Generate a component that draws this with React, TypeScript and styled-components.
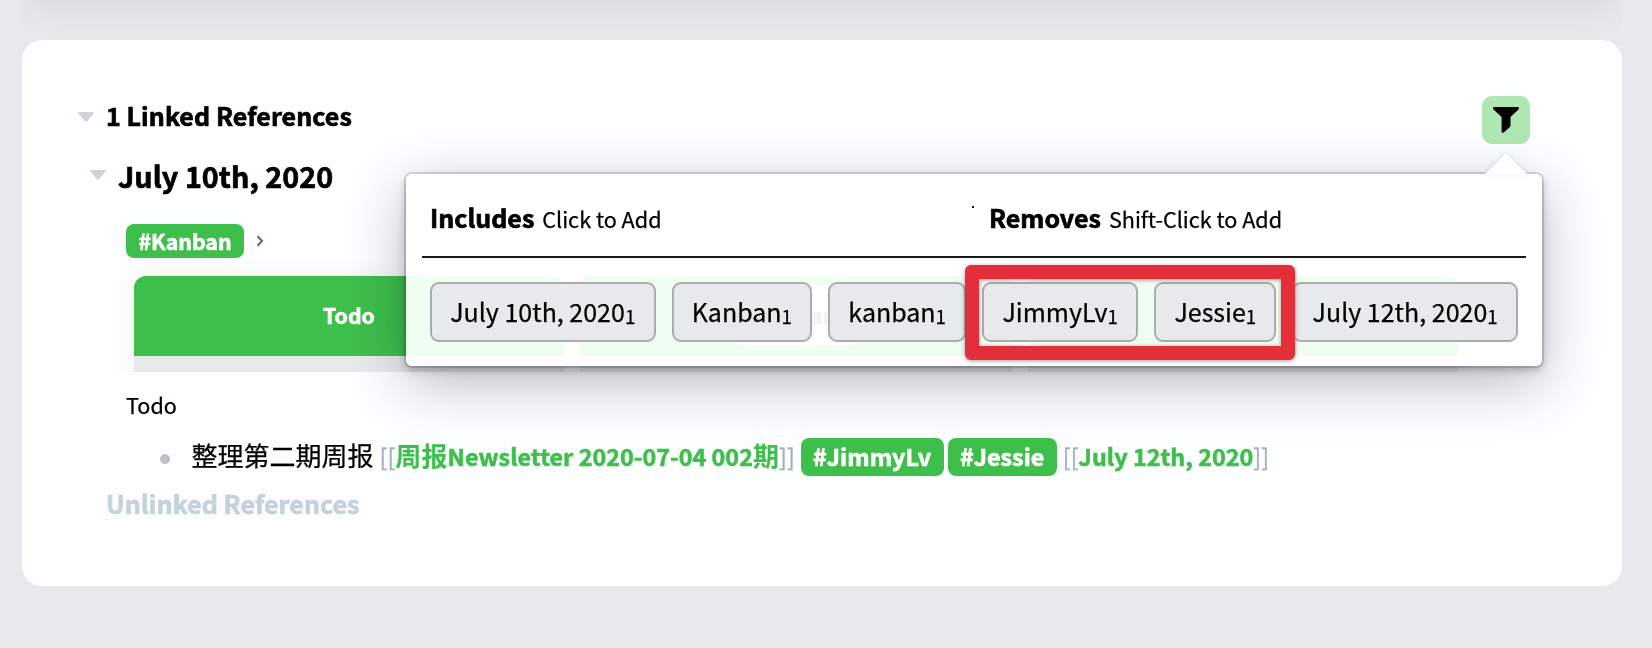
import React from "react";
import styled, { createGlobalStyle } from "styled-components";

const green = "#3ebf4b";

const GlobalStyle = createGlobalStyle`
  * { box-sizing: border-box; }
  body {
    margin: 0;
    background: #e8e9eb;
    color: #000;
    font-family: "Noto Sans CJK SC", "Open Sans", sans-serif;
    -webkit-text-stroke: 0.25px;
  }
`;

const Page = styled.div`
  height: 648px;
  padding: 0 30px 0 22px;
  overflow: hidden;
`;

const PreviousEdge = styled.div`
  height: 40px;
  overflow: hidden;
  &::before {
    content: "";
    display: block;
    height: 40px;
    margin-top: -40px;
    box-shadow: 0 0 50px rgba(0, 0, 0, 0.1);
  }
`;

const Card = styled.main`
  position: relative;
  display: flex;
  flex-direction: column;
  height: 546px;
  padding: 50px 92px 0 56px;
  border-radius: 20px;
  background: #fdfeff;
`;

const Row = styled.div<{ $height: number; $top?: number; $indent?: number }>`
  display: flex;
  align-items: center;
  flex: none;
  height: ${(p) => p.$height}px;
  margin-top: ${(p) => p.$top ?? 0}px;
  padding-left: ${(p) => p.$indent ?? 0}px;
  white-space: nowrap;
`;

const Caret = styled.svg<{ $shift: number }>`
  display: block;
  width: 16px;
  height: 10px;
  margin-top: ${(p) => p.$shift}px;
  fill: #d1d2d3;
`;

const SectionTitle = styled.h2<{ $muted?: boolean }>`
  margin: 0 0 0 ${(p) => (p.$muted ? 0 : 12)}px;
  font-size: 25px;
  line-height: 30px;
  letter-spacing: 0.08px;
  -webkit-text-stroke: 0.7px;
  color: ${(p) => (p.$muted ? "#c5d1dc" : "#000")};
`;

const PageTitle = styled.h1`
  margin: 0 0 0 12px;
  font-size: 28.7px;
  line-height: 36px;
  letter-spacing: 0.06px;
  -webkit-text-stroke: 0.7px;
`;

const FilterButton = styled.button`
  display: flex;
  align-items: center;
  justify-content: center;
  width: 48px;
  height: 48px;
  margin: 10px 0 0 auto;
  padding: 0 0 1px;
  border: 0;
  border-radius: 10px;
  background: #aee7b2;
`;

const Tag = styled.span<{ $small?: boolean }>`
  height: ${(p) => (p.$small ? 34 : 38)}px;
  margin-right: ${(p) => (p.$small ? 12 : 4)}px;
  padding: 0 12.5px;
  border-radius: 8px;
  background: ${green};
  color: #fff;
  font-size: ${(p) => (p.$small ? 21.3 : 23.3)}px;
  font-weight: 700;
  line-height: ${(p) => (p.$small ? 33 : 36)}px;
  -webkit-text-stroke: 0.6px;
`;

const Board = styled.div`
  display: grid;
  grid-template-columns: 430px 432px 430px;
  gap: 16px;
  flex: none;
  height: 112px;
  margin: 2px 0 0 42px;
  padding: 16px 0 0 14px;
  overflow: hidden;
`;

const Column = styled.section`
  height: 140px;
  border-radius: 12px;
  overflow: hidden;
  background: #e8e9eb;
  box-shadow: 0 0 24px rgba(0, 0, 0, 0.06);
`;

const ColumnHeader = styled.header`
  display: flex;
  align-items: center;
  justify-content: center;
  height: 80px;
  padding-bottom: 3px;
  background: ${green};
  color: #fff;
  font-size: 21.3px;
  font-weight: 700;
  -webkit-text-stroke: 0.6px;
`;

const ColumnName = styled.span`
  padding: 0 24px;
  border-radius: 8px;
  background: #fff;
  color: #23262b;
  line-height: 60px;
`;

const Path = styled.p`
  margin: 0;
  font-size: 21.6px;
  line-height: 30px;
`;

const Bullet = styled.span`
  width: 10px;
  height: 10px;
  margin: 4px 21.5px 0 0;
  border-radius: 50%;
  background: #c0c1c2;
`;

const Block = styled.div`
  display: flex;
  align-items: baseline;
  margin-top: -2px;
  font-size: 26px;
  line-height: 36px;
`;

const PageLink = styled.span<{ $gap?: number }>`
  margin: 0 5.8px 0 ${(p) => p.$gap ?? 6}px;
  color: ${green};
  font-size: 23.3px;
  font-weight: 700;
  letter-spacing: 0.04px;
  -webkit-text-stroke: 0.6px;
`;

const Bracket = styled.span`
  color: #a0afbc;
  font-weight: 400;
  -webkit-text-stroke: 0.3px;
`;

const Han = styled.span`
  font-size: 26px;
  -webkit-text-stroke: 0;
`;

const Popover = styled.div`
  position: absolute;
  top: 134px;
  left: 384px;
  width: 1136px;
  height: 192px;
  padding: 8px 16px 0;
  border-radius: 6px;
  background: rgba(255, 255, 255, 0.94);
  backdrop-filter: saturate(1.5);
  box-shadow: 0 0 0 2px rgba(16, 22, 26, 0.14), 0 4px 8px rgba(16, 22, 26, 0.26),
    0 16px 56px rgba(16, 22, 46, 0.3);
`;

const Arrow = styled.svg`
  position: absolute;
  top: -21px;
  right: 12px;
  width: 48px;
  height: 22px;
  fill: #fdfeff;
  filter: drop-shadow(0 -1px 2px rgba(16, 22, 26, 0.12));
`;

const PopoverHeader = styled.div`
  display: grid;
  grid-template-columns: 1fr 537px;
  height: 76px;
  padding: 17px 0 0 8px;
  border-bottom: 2px solid #14191f;
`;

const Legend = styled.div`
  display: flex;
  align-items: baseline;
  gap: 8px;
  height: 36px;
  line-height: 36px;
  white-space: nowrap;
`;

const LegendName = styled.strong`
  font-size: 25px;
  -webkit-text-stroke: 0.7px;
`;

const LegendHint = styled.span`
  font-size: 21.6px;
`;

const Speck = styled.i`
  position: absolute;
  top: 32px;
  left: 566px;
  width: 2px;
  height: 2px;
  background: #111;
`;

const Chips = styled.div`
  display: flex;
  gap: 16px;
  padding: 24px 0 0 8px;
`;

const Chip = styled.button`
  height: 60px;
  padding: 0 18.2px 2px;
  border: 2px solid #a9acae;
  border-radius: 9px;
  background: #e8e9eb;
  color: #000;
  font-family: inherit;
  font-size: 25px;
  line-height: 54px;
  white-space: nowrap;
  -webkit-text-stroke: 0.25px;
`;

const Count = styled.small`
  position: relative;
  top: 2px;
  font-size: 18.8px;
  line-height: 1;
`;

const Highlight = styled.div`
  position: absolute;
  top: 91px;
  left: 559px;
  width: 330px;
  height: 95px;
  border: 14px solid #e22f39;
  border-radius: 6px;
  filter: drop-shadow(0 1px 2px rgba(60, 0, 0, 0.4));
`;

const filters = ["July 10th, 2020", "Kanban", "kanban", "JimmyLv", "Jessie", "July 12th, 2020"];

const CaretIcon = ({ shift }: { shift: number }) => (
  <Caret viewBox="0 0 16 10" $shift={shift}>
    <path d="M1 0h14c1 0 1.3.9.6 1.6L8.7 9.4c-.4.5-1 .5-1.4 0L.4 1.6C-.3.9 0 0 1 0z" />
  </Caret>
);

export default function App() {
  return (
    <>
      <GlobalStyle />
      <Page>
        <PreviousEdge />
        <Card>
          <Row $height={50}>
            <CaretIcon shift={4} />
            <SectionTitle>1 Linked References</SectionTitle>
            <FilterButton aria-label="Filter">
              <svg width="26" height="26" viewBox="0 0 26 26">
                <path d="M1.4 0h23.2c1.4 0 1.8 1.5.9 2.4L17.5 10v8.6c0 .6-.2 1-.6 1.4l-5.8 5.3c-1 .9-2.5.4-2.5-.9V10L.5 2.4C-.4 1.5 0 0 1.4 0z" />
              </svg>
            </FilterButton>
          </Row>
          <Row $height={51} $top={10} $indent={12}>
            <CaretIcon shift={-1} />
            <PageTitle>July 10th, 2020</PageTitle>
          </Row>
          <Row $height={34} $top={23} $indent={48}>
            <Tag $small>#Kanban</Tag>
            <svg width="8" height="12" viewBox="0 0 8 12" fill="none" stroke="#5c7080" strokeWidth="2.2">
              <path d="M1.5 1.2 6 6l-4.5 4.8" />
            </svg>
          </Row>
          <Board>
            <Column>
              <ColumnHeader>Todo</ColumnHeader>
            </Column>
            <Column>
              <ColumnHeader>
                <ColumnName>Kanban</ColumnName>
              </ColumnHeader>
            </Column>
            <Column>
              <ColumnHeader />
            </Column>
          </Board>
          <Row $height={30} $top={18} $indent={48}>
            <Path>Todo</Path>
          </Row>
          <Row $height={38} $top={18} $indent={82}>
            <Bullet />
            <Block>
              整理第二期周报
              <PageLink>
                <Bracket>[[</Bracket>
                <Han>周报</Han>Newsletter 2020-07-04 002<Han>期</Han>
                <Bracket>]]</Bracket>
              </PageLink>
              <Tag>#JimmyLv</Tag>
              <Tag>#Jessie</Tag>
              <PageLink $gap={2}>
                <Bracket>[[</Bracket>July 12th, 2020<Bracket>]]</Bracket>
              </PageLink>
            </Block>
          </Row>
          <Row $height={30} $top={12} $indent={28}>
            <SectionTitle $muted>Unlinked References</SectionTitle>
          </Row>
          <Popover>
            <Arrow viewBox="0 0 48 22">
              <path d="M0 21.5c2.3-.2 3.6-1 5-2.5L22.8 1c.8-.8 1.6-.8 2.4 0L43 19c1.4 1.5 2.7 2.300 5 2.500z" />
            </Arrow>
            <PopoverHeader>
              <Legend>
                <LegendName>Includes</LegendName>
                <LegendHint>Click to Add</LegendHint>
              </Legend>
              <Legend>
                <LegendName>Removes</LegendName>
                <LegendHint>Shift-Click to Add</LegendHint>
              </Legend>
              <Speck />
            </PopoverHeader>
            <Chips>
              {filters.map((name) => (
                <Chip key={name}>
                  {name}
                  <Count>1</Count>
                </Chip>
              ))}
            </Chips>
            <Highlight />
          </Popover>
        </Card>
      </Page>
    </>
  );
}
